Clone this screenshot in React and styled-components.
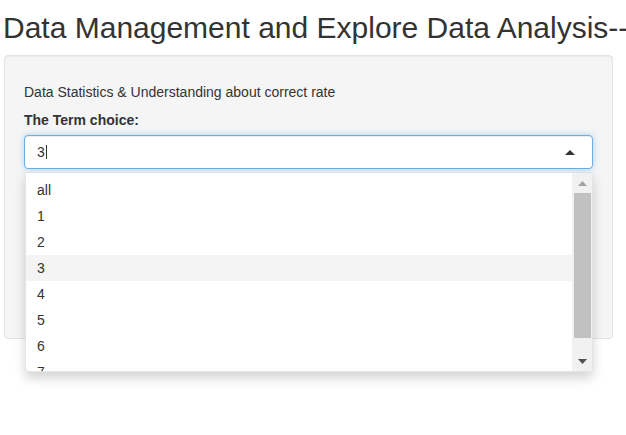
import React from "react";
import styled, { createGlobalStyle } from "styled-components";

const GlobalStyle = createGlobalStyle`
  body {
    margin: 0;
    padding: 0;
    min-height: 100vh;
    background: #fff;
    font-family: "Liberation Sans", Arial, Helvetica, sans-serif;
    font-size: 14px;
    line-height: 20px;
    color: #333;
  }
`;

const Page = styled.div`
  padding: 0 13px 0 4px;
`;

const Title = styled.h2`
  margin: 11px -13px 11px -1px;
  font-size: 30px;
  line-height: 33px;
  font-weight: 500;
  white-space: nowrap;
  overflow: hidden;
  color: #333;
`;

const Well = styled.div`
  background: #f5f5f5;
  border: 1px solid #e3e3e3;
  border-radius: 4px;
  box-shadow: inset 0 1px 1px rgba(0, 0, 0, 0.05);
  padding: 26px 19px 19px;
`;

const Intro = styled.div`
  margin-bottom: 8px;
`;

const Label = styled.label`
  display: block;
  font-weight: bold;
  margin-bottom: 5px;
`;

const SelectWrap = styled.div`
  position: relative;
  margin-bottom: 15px;
`;

const Control = styled.div`
  box-sizing: border-box;
  height: 34px;
  display: flex;
  align-items: center;
  padding: 0 12px;
  background: #fff;
  border: 1px solid #66afe9;
  border-radius: 4px;
  box-shadow: inset 0 1px 1px rgba(0, 0, 0, 0.075),
    0 0 6px rgba(102, 175, 233, 0.5);
`;

const Value = styled.span`
  color: #333;
`;

const Cursor = styled.span`
  display: inline-block;
  width: 1px;
  height: 14px;
  margin-left: 1px;
  background: #333;
`;

const Caret = styled.svg`
  margin-left: auto;
  margin-right: 5px;
`;

const Dropdown = styled.div`
  position: absolute;
  top: calc(100% + 3px);
  left: 1px;
  right: 0;
  z-index: 10;
  display: flex;
  background: #fff;
  border: 1px solid rgba(0, 0, 0, 0.1);
  border-top-color: #dde3ea;
  border-radius: 0 0 4px 4px;
  box-shadow: 0 6px 12px rgba(0, 0, 0, 0.175);
`;

const Options = styled.div`
  flex: 1;
  height: 198px;
  padding: 4px 0;
  box-sizing: border-box;
  overflow: hidden;
`;

const Option = styled.div`
  padding: 3px 12px 3px 11px;
  line-height: 20px;
  background: ${(p) => (p.$active ? "#f4f4f4" : "transparent")};
  color: #333;
`;

const ScrollBar = styled.div`
  width: 20px;
  height: 198px;
  display: flex;
  flex-direction: column;
  background: #f1f1f1;
`;

const ScrollButton = styled.div`
  height: 17px;
  display: flex;
  align-items: center;
  justify-content: center;
  padding-top: ${(p) => (p.$up ? "3px" : "0")};
  padding-bottom: ${(p) => (p.$up ? "0" : "3px")};
  box-sizing: border-box;
`;

const Track = styled.div`
  flex: 1;
  padding: 3px 1px 16px 2px;
  display: flex;
  flex-direction: column;
`;

const Thumb = styled.div`
  flex: 1;
  background: #c1c1c1;
`;

const OutputArea = styled.div`
  height: 135px;
`;

const choices = ["all", "1", "2", "3", "4", "5", "6", "7"];

export default function App() {
  return (
    <>
      <GlobalStyle />
      <Page>
        <Title>Data Management and Explore Data Analysis-----------</Title>
        <Well>
          <Intro>Data Statistics &amp; Understanding about correct rate</Intro>
          <Label>The Term choice:</Label>
          <SelectWrap>
            <Control>
              <Value>3</Value>
              <Cursor />
              <Caret width="10" height="5" viewBox="0 0 10 5">
                <path d="M0 5L5 0L10 5Z" fill="#333" />
              </Caret>
            </Control>
            <Dropdown>
              <Options>
                {choices.map((c) => (
                  <Option key={c} $active={c === "3"}>
                    {c}
                  </Option>
                ))}
              </Options>
              <ScrollBar>
                <ScrollButton $up>
                  <svg width="9" height="5" viewBox="0 0 9 5">
                    <path d="M0 5L4.5 0L9 5Z" fill="#a3a3a3" />
                  </svg>
                </ScrollButton>
                <Track>
                  <Thumb />
                </Track>
                <ScrollButton>
                  <svg width="9" height="5" viewBox="0 0 9 5">
                    <path d="M0 0L4.5 5L9 0Z" fill="#505050" />
                  </svg>
                </ScrollButton>
              </ScrollBar>
            </Dropdown>
          </SelectWrap>
          <OutputArea />
        </Well>
      </Page>
    </>
  );
}
